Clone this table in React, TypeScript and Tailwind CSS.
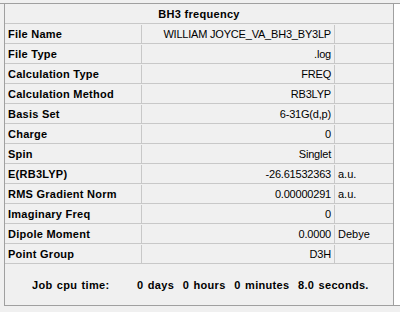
import React from 'react';

type Row = { label: string; value: string; unit?: string };

const ROWS: Row[] = [
  { label: 'File Name', value: 'WILLIAM JOYCE_VA_BH3_BY3LP' },
  { label: 'File Type', value: '.log' },
  { label: 'Calculation Type', value: 'FREQ' },
  { label: 'Calculation Method', value: 'RB3LYP' },
  { label: 'Basis Set', value: '6-31G(d,p)' },
  { label: 'Charge', value: '0' },
  { label: 'Spin', value: 'Singlet' },
  { label: 'E(RB3LYP)', value: '-26.61532363', unit: 'a.u.' },
  { label: 'RMS Gradient Norm', value: '0.00000291', unit: 'a.u.' },
  { label: 'Imaginary Freq', value: '0' },
  { label: 'Dipole Moment', value: '0.0000', unit: 'Debye' },
  { label: 'Point Group', value: 'D3H' },
];

const App: React.FC = () => {
  return (
    <div
      className="w-[400px] h-[312px] bg-[#f0f0f0] pt-[3px] text-[11px] text-black overflow-hidden"
      style={{ fontFamily: '"Liberation Sans", Arial, sans-serif' }}
    >
      <div className="h-px bg-[#a0a0a0]" />
      <div className="flex h-[301px]">
        <div className="w-[4px]" />
        {/* Summary panel */}
        <div className="w-[390px] border-l border-r border-[#a0a0a0] flex flex-col">
          <div className="h-[20px] border-b border-[#c8c8c8] flex items-center justify-center font-bold tracking-[0.3px] pt-px">
            BH3 frequency
          </div>
          {ROWS.map((row) => (
            <div key={row.label} className="h-[20px] border-b border-[#c8c8c8] flex pt-px">
              <div className="w-[137px] border-r border-[#c8c8c8] pl-[3px] flex items-center font-bold tracking-[0.25px] whitespace-nowrap">
                {row.label}
              </div>
              <div className="w-[193px] border-r border-[#c8c8c8] pr-[3px] flex items-center justify-end tracking-[-0.2px] whitespace-nowrap">
                {row.value}
              </div>
              <div className="flex-1 pl-[3px] flex items-center">{row.unit}</div>
            </div>
          ))}
          <div className="flex-1 flex items-center font-bold whitespace-pre tracking-[0.3px] [word-spacing:1px] pt-px">
            <span className="pl-[27px] w-[132px]">Job cpu time:</span>
            <span>0 days  0 hours  0 minutes  8.0 seconds.</span>
          </div>
        </div>
        <div className="flex-1 bg-white" />
      </div>
      <div className="ml-[4px] h-px bg-[#a0a0a0]" />
    </div>
  );
};

export default App;
